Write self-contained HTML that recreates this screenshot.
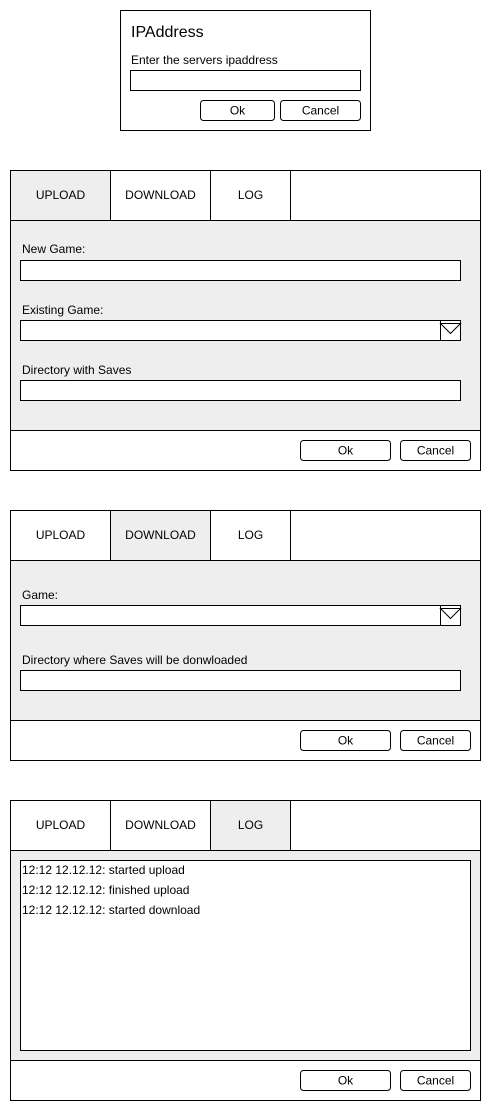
<!DOCTYPE html>
<html><head><style>body{margin:0;background:#fff}svg{display:block}text{font-family:"Liberation Sans",Arial,sans-serif;font-size:12px;fill:#000}</style></head><body>
<svg width="491" height="1111" viewBox="0 0 491 1111" xmlns="http://www.w3.org/2000/svg">
<g fill="none" stroke="#000" stroke-width="1">
<rect x="120.5" y="10.5" width="250" height="120" fill="#fff"/>
<rect x="130.5" y="70.5" width="230" height="20" fill="#fff"/>
<rect x="200.5" y="100.5" width="74" height="20" rx="3"/>
<rect x="280.5" y="100.5" width="80" height="20" rx="3"/>
</g>
<text x="131" y="37" style="font-size:16px">IPAddress</text>
<text x="131" y="64">Enter the servers ipaddress</text>
<text x="237.5" y="114.5" text-anchor="middle">Ok</text>
<text x="320.5" y="114.5" text-anchor="middle">Cancel</text>

<!-- Panel 1 -->
<g stroke="#000" stroke-width="1">
<rect x="10.5" y="170.5" width="470" height="300" fill="#fff"/>
<rect x="10.5" y="170.5" width="100" height="50" fill="#eee"/>
<rect x="110.5" y="170.5" width="100" height="50" fill="#fff"/>
<rect x="210.5" y="170.5" width="80" height="50" fill="#fff"/>
<rect x="10.5" y="220.5" width="470" height="210" fill="#eee"/>
<rect x="20.5" y="260.5" width="440" height="20" fill="#fff"/>
<rect x="20.5" y="320.5" width="440" height="20" fill="#fff"/>
<rect x="440.5" y="320.5" width="20" height="20" fill="#fff"/>
<path d="M440.5 323.5H460.5L450.5 333.5Z" fill="none"/>
<rect x="20.5" y="380.5" width="440" height="20" fill="#fff"/>
<rect x="300.5" y="440.5" width="90" height="20" rx="3" fill="#fff"/>
<rect x="400.5" y="440.5" width="70" height="20" rx="3" fill="#fff"/>
</g>
<text x="60.5" y="199" text-anchor="middle">UPLOAD</text>
<text x="160.5" y="199" text-anchor="middle">DOWNLOAD</text>
<text x="250.5" y="199" text-anchor="middle">LOG</text>
<text x="22" y="253">New Game:</text>
<text x="22" y="314">Existing Game:</text>
<text x="22" y="374">Directory with Saves</text>
<text x="345.5" y="454.5" text-anchor="middle">Ok</text>
<text x="435.5" y="454.5" text-anchor="middle">Cancel</text>

<!-- Panel 2 -->
<g stroke="#000" stroke-width="1">
<rect x="10.5" y="510.5" width="470" height="250" fill="#fff"/>
<rect x="10.5" y="510.5" width="100" height="50" fill="#fff"/>
<rect x="110.5" y="510.5" width="100" height="50" fill="#eee"/>
<rect x="210.5" y="510.5" width="80" height="50" fill="#fff"/>
<rect x="10.5" y="560.5" width="470" height="160" fill="#eee"/>
<rect x="20.5" y="605.5" width="440" height="20" fill="#fff"/>
<rect x="440.5" y="605.5" width="20" height="20" fill="#fff"/>
<path d="M440.5 608.5H460.5L450.5 618.5Z" fill="none"/>
<rect x="20.5" y="670.5" width="440" height="20" fill="#fff"/>
<rect x="300.5" y="730.5" width="90" height="20" rx="3" fill="#fff"/>
<rect x="400.5" y="730.5" width="70" height="20" rx="3" fill="#fff"/>
</g>
<text x="60.5" y="539" text-anchor="middle">UPLOAD</text>
<text x="160.5" y="539" text-anchor="middle">DOWNLOAD</text>
<text x="250.5" y="539" text-anchor="middle">LOG</text>
<text x="22" y="599">Game:</text>
<text x="22" y="664">Directory where Saves will be donwloaded</text>
<text x="345.5" y="744.5" text-anchor="middle">Ok</text>
<text x="435.5" y="744.5" text-anchor="middle">Cancel</text>

<!-- Panel 3 -->
<g stroke="#000" stroke-width="1">
<rect x="10.5" y="800.5" width="470" height="300" fill="#fff"/>
<rect x="10.5" y="800.5" width="100" height="50" fill="#fff"/>
<rect x="110.5" y="800.5" width="100" height="50" fill="#fff"/>
<rect x="210.5" y="800.5" width="80" height="50" fill="#eee"/>
<rect x="10.5" y="850.5" width="470" height="210" fill="#eee"/>
<rect x="20.5" y="860.5" width="450" height="190" fill="#fff"/>
<rect x="300.5" y="1070.5" width="90" height="20" rx="3" fill="#fff"/>
<rect x="400.5" y="1070.5" width="70" height="20" rx="3" fill="#fff"/>
</g>
<text x="60.5" y="829" text-anchor="middle">UPLOAD</text>
<text x="160.5" y="829" text-anchor="middle">DOWNLOAD</text>
<text x="250.5" y="829" text-anchor="middle">LOG</text>
<text x="22" y="874">12:12 12.12.12: started upload</text>
<text x="22" y="894">12:12 12.12.12: finished upload</text>
<text x="22" y="914">12:12 12.12.12: started download</text>
<text x="345.5" y="1084.5" text-anchor="middle">Ok</text>
<text x="435.5" y="1084.5" text-anchor="middle">Cancel</text>
</svg>
</body></html>
